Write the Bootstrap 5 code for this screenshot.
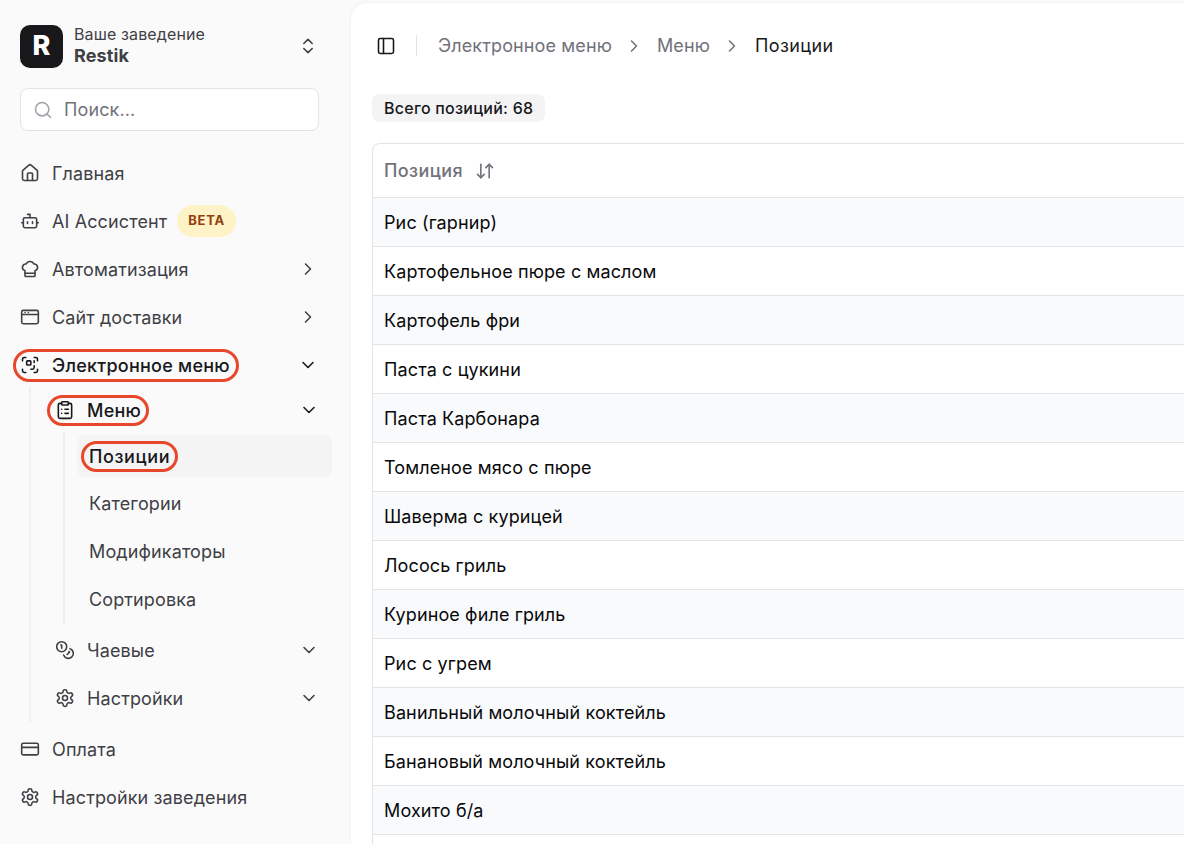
<!DOCTYPE html>
<html lang="ru">
<head>
  <meta charset="UTF-8" />
  <meta name="viewport" content="width=device-width, initial-scale=1.0" />
  <title>Позиции - Restik</title>
  <link href="https://cdn.jsdelivr.net/npm/bootstrap@5.3.3/dist/css/bootstrap.min.css" rel="stylesheet" />
  <style>
    html, body {
      height: 100%;
      overflow: hidden;
    }
    body {
      background: #fafafa;
      font-family: Inter, "Noto Sans", sans-serif;
      color: #3f3f46;
      font-size: 18px;
      letter-spacing: .12px;
    }
    svg.ico {
      width: 20px;
      height: 20px;
      flex: none;
      fill: none;
      stroke: currentColor;
      stroke-width: 1.9;
      stroke-linecap: round;
      stroke-linejoin: round;
    }
    .side-panel {
      width: 351px;
      flex: none;
      padding: 24px 18px 0 20px;
    }
    .logo-box {
      width: 43px;
      height: 43px;
      border-radius: 10px;
      background: #18181b;
      color: #fff;
      font-weight: 800;
      font-size: 27px;
      flex: none;
      margin-right: 11px;
    }
    .org-label {
      font-size: 16px;
      line-height: 20px;
      color: #3f3f46;
    }
    .org-name {
      font-size: 18px;
      line-height: 24px;
      font-weight: 700;
      color: #3f3f46;
    }
    .search-box {
      width: 299px;
      height: 43px;
      margin-top: 20px;
      margin-bottom: 18px;
      background: #fff;
      border: 1px solid #e4e4e7;
      border-radius: 8px;
      padding-left: 12px;
      color: #71717a;
      gap: 11px;
    }
    .nav-line {
      height: 48px;
      width: 299px;
      color: #3f3f46;
      gap: 12px;
      position: relative;
    }
    .nav-line .caret {
      margin-left: auto;
      margin-right: 1px;
    }
    .nav-line.on {
      color: #18181b;
    }
    .on-text {
      font-weight: 500;
      letter-spacing: .25px;
    }
    .beta-tag {
      background: #fef3c7;
      color: #92400e;
      font-size: 13px;
      font-weight: 700;
      letter-spacing: .7px;
      height: 32px;
      padding: 0 11px;
      border-radius: 16px;
      margin-left: -2px;
    }
    .sub-one {
      margin-left: 9px;
      border-left: 2px solid #f0f0f1;
      padding: 1px 0 0 24px;
      margin-top: -2px;
      margin-bottom: 3px;
      height: 335px;
    }
    .sub-line {
      height: 44px;
      width: 265px;
      gap: 12px;
      margin-bottom: 4px;
    }
    .sub-two {
      margin-left: 8px;
      border-left: 2px solid #f0f0f1;
      padding: 3px 0 4px 12px;
      margin-bottom: 4px;
      margin-top: -4px;
    }
    .leaf-line {
      height: 42px;
      width: 255px;
      margin-bottom: 6px;
      padding-left: 12px;
      border-radius: 8px;
      color: #3f3f46;
    }
    .leaf-line:last-child {
      margin-bottom: 0;
    }
    .leaf-line.on {
      background: #f4f4f5;
      color: #18181b;
      margin-bottom: 5px;
    }
    .leaf-line.on .on-text {
      letter-spacing: .6px;
    }
    .mark-ring {
      position: absolute;
      border: 3px solid #e8472b;
      border-radius: 999px;
      pointer-events: none;
    }
    .main-panel {
      margin-top: 3px;
      background: #fff;
      border-top-left-radius: 16px;
      box-shadow: 0 0 3px rgba(0, 0, 0, .08);
      padding-left: 21px;
      min-width: 0;
    }
    .crumb-bar {
      height: 85px;
      padding-left: 4px;
      color: #71717a;
    }
    .crumb-sep {
      width: 1px;
      height: 21px;
      background: #e4e4e7;
      margin: 0 21px 0 20px;
    }
    .crumb-arrow {
      width: 14px;
      height: 14px;
      margin: 0 13px 0 12px;
      color: #71717a;
    }
    .crumb-now {
      color: #18181b;
      letter-spacing: .4px;
    }
    .count-pill {
      display: inline-block;
      background: #f4f4f5;
      color: #18181b;
      font-size: 16px;
      font-weight: 500;
      letter-spacing: .25px;
      line-height: 28px;
      padding: 0 12px;
      border-radius: 8px;
      margin-top: 6px;
      margin-bottom: 21px;
      vertical-align: top;
    }
    .pos-table {
      border: 1px solid #e4e4e7;
      border-right: 0;
      border-top-left-radius: 8px;
      width: 900px;
    }
    .pos-head {
      height: 53px;
      padding-left: 11px;
      color: #71717a;
      font-weight: 500;
      letter-spacing: .4px;
      gap: 12px;
    }
    .pos-row {
      height: 49px;
      border-top: 1px solid #e4e4e7;
      padding-left: 11px;
      color: #09090b;
    }
    .pos-row:nth-child(even) {
      background: #f9fafb;
    }
  </style>
</head>
<body>
  <div class="d-flex h-100">
    <!-- Sidebar -->
    <div class="side-panel position-relative">
      <div class="d-flex align-items-center" style="width:299px">
        <div class="logo-box d-flex align-items-center justify-content-center">R</div>
        <div>
          <div class="org-label">Ваше заведение</div>
          <div class="org-name">Restik</div>
        </div>
        <svg class="ico ms-auto" viewBox="0 0 24 24" style="margin-right:1px"><path d="m7 15 5 5 5-5"/><path d="m7 9 5-5 5 5"/></svg>
      </div>

      <div class="search-box d-flex align-items-center">
        <svg class="ico" viewBox="0 0 24 24" style="color:#a1a1aa"><circle cx="11" cy="11" r="8"/><path d="m21 21-4.3-4.3"/></svg>
        <span>Поиск...</span>
      </div>

      <div class="nav-line d-flex align-items-center">
        <svg class="ico" viewBox="0 0 24 24"><path d="M15 21v-8a1 1 0 0 0-1-1h-4a1 1 0 0 0-1 1v8"/><path d="M3 10a2 2 0 0 1 .7-1.5l7-6a2 2 0 0 1 2.6 0l7 6A2 2 0 0 1 21 10v9a2 2 0 0 1-2 2H5a2 2 0 0 1-2-2z"/></svg>
        <span>Главная</span>
      </div>
      <div class="nav-line d-flex align-items-center">
        <svg class="ico" viewBox="0 0 24 24"><path d="M12 8V4H9"/><rect x="4" y="8" width="16" height="12" rx="2"/><path d="M2 14h2"/><path d="M20 14h2"/><path d="M15 13v2"/><path d="M9 13v2"/></svg>
        <span>AI Ассистент</span>
        <span class="beta-tag d-flex align-items-center">BETA</span>
      </div>
      <div class="nav-line d-flex align-items-center">
        <svg class="ico" viewBox="0 0 24 24"><path d="M17 21a1 1 0 0 0 1-1v-5.35c0-.46.31-.85.75-1.03a4 4 0 0 0-2.13-7.6 5 5 0 0 0-9.24 0 4 4 0 0 0-2.13 7.6c.44.18.75.57.75 1.03V20a1 1 0 0 0 1 1z"/><path d="M6 17h12"/></svg>
        <span>Автоматизация</span>
        <svg class="ico caret" viewBox="0 0 24 24"><path d="m9 18 6-6-6-6"/></svg>
      </div>
      <div class="nav-line d-flex align-items-center">
        <svg class="ico" viewBox="0 0 24 24"><rect x="2" y="4" width="20" height="16" rx="2"/><path d="M2 9h20"/><path d="M6 6.5h.01"/><path d="M10 6.5h.01"/></svg>
        <span>Сайт доставки</span>
        <svg class="ico caret" viewBox="0 0 24 24"><path d="m9 18 6-6-6-6"/></svg>
      </div>
      <div class="nav-line on d-flex align-items-center">
        <svg class="ico" viewBox="0 0 24 24"><path d="M3 7V5a2 2 0 0 1 2-2h2"/><path d="M17 3h2a2 2 0 0 1 2 2v2"/><path d="M21 17v2a2 2 0 0 1-2 2h-2"/><path d="M7 21H5a2 2 0 0 1-2-2v-2"/><rect x="8" y="7" width="5" height="5" rx="1"/><path d="M17 13v2a2 2 0 0 1-2 2h-2"/><path d="M17 7v2"/></svg>
        <span class="on-text">Электронное меню</span>
        <svg class="ico caret" viewBox="0 0 24 24"><path d="m6 9 6 6 6-6"/></svg>
        <span class="mark-ring" style="left:-7px;top:8px;width:226px;height:33px"></span>
      </div>

      <div class="sub-one">
        <div class="sub-line on nav-line d-flex align-items-center">
          <svg class="ico" viewBox="0 0 24 24"><rect x="8" y="2" width="8" height="4" rx="1"/><path d="M16 4h2a2 2 0 0 1 2 2v14a2 2 0 0 1-2 2H6a2 2 0 0 1-2-2V6a2 2 0 0 1 2-2h2"/><path d="M12 11h4"/><path d="M12 16h4"/><path d="M8 11h.01"/><path d="M8 16h.01"/></svg>
          <span class="on-text">Меню</span>
          <svg class="ico caret" viewBox="0 0 24 24"><path d="m6 9 6 6 6-6"/></svg>
          <span class="mark-ring" style="left:-8px;top:7px;width:102px;height:31px"></span>
        </div>
        <div class="sub-two">
          <div class="leaf-line on d-flex align-items-center position-relative">
            <span class="on-text">Позиции</span>
            <span class="mark-ring" style="left:4px;top:6px;width:97px;height:31px"></span>
          </div>
          <div class="leaf-line d-flex align-items-center">Категории</div>
          <div class="leaf-line d-flex align-items-center">Модификаторы</div>
          <div class="leaf-line d-flex align-items-center">Сортировка</div>
        </div>
        <div class="sub-line nav-line d-flex align-items-center">
          <svg class="ico" viewBox="0 0 24 24"><circle cx="8" cy="8" r="6"/><path d="M18.09 10.37A6 6 0 1 1 10.34 18"/><path d="M7 6h1v4"/><path d="m16.71 13.88.7.71-2.82 2.82"/></svg>
          <span>Чаевые</span>
          <svg class="ico caret" viewBox="0 0 24 24"><path d="m6 9 6 6 6-6"/></svg>
        </div>
        <div class="sub-line nav-line d-flex align-items-center">
          <svg class="ico" viewBox="0 0 24 24"><path d="M12.22 2h-.44a2 2 0 0 0-2 2v.18a2 2 0 0 1-1 1.73l-.43.25a2 2 0 0 1-2 0l-.15-.08a2 2 0 0 0-2.73.73l-.22.38a2 2 0 0 0 .73 2.73l.15.1a2 2 0 0 1 1 1.72v.51a2 2 0 0 1-1 1.74l-.15.09a2 2 0 0 0-.73 2.73l.22.38a2 2 0 0 0 2.73.73l.15-.08a2 2 0 0 1 2 0l.43.25a2 2 0 0 1 1 1.73V20a2 2 0 0 0 2 2h.44a2 2 0 0 0 2-2v-.18a2 2 0 0 1 1-1.73l.43-.25a2 2 0 0 1 2 0l.15.08a2 2 0 0 0 2.73-.73l.22-.39a2 2 0 0 0-.73-2.73l-.15-.08a2 2 0 0 1-1-1.74v-.5a2 2 0 0 1 1-1.74l.15-.09a2 2 0 0 0 .73-2.73l-.22-.38a2 2 0 0 0-2.73-.73l-.15.08a2 2 0 0 1-2 0l-.43-.25a2 2 0 0 1-1-1.73V4a2 2 0 0 0-2-2z"/><circle cx="12" cy="12" r="3"/></svg>
          <span>Настройки</span>
          <svg class="ico caret" viewBox="0 0 24 24"><path d="m6 9 6 6 6-6"/></svg>
        </div>
      </div>

      <div class="nav-line d-flex align-items-center">
        <svg class="ico" viewBox="0 0 24 24"><rect x="2" y="5" width="20" height="14" rx="2"/><path d="M2 10h20"/></svg>
        <span>Оплата</span>
      </div>
      <div class="nav-line d-flex align-items-center">
        <svg class="ico" viewBox="0 0 24 24"><path d="M12.22 2h-.44a2 2 0 0 0-2 2v.18a2 2 0 0 1-1 1.73l-.43.25a2 2 0 0 1-2 0l-.15-.08a2 2 0 0 0-2.73.73l-.22.38a2 2 0 0 0 .73 2.73l.15.1a2 2 0 0 1 1 1.72v.51a2 2 0 0 1-1 1.74l-.15.09a2 2 0 0 0-.73 2.73l.22.38a2 2 0 0 0 2.73.73l.15-.08a2 2 0 0 1 2 0l.43.25a2 2 0 0 1 1 1.73V20a2 2 0 0 0 2 2h.44a2 2 0 0 0 2-2v-.18a2 2 0 0 1 1-1.73l.43-.25a2 2 0 0 1 2 0l.15.08a2 2 0 0 0 2.73-.73l.22-.39a2 2 0 0 0-.73-2.73l-.15-.08a2 2 0 0 1-1-1.74v-.5a2 2 0 0 1 1-1.74l.15-.09a2 2 0 0 0 .73-2.73l-.22-.38a2 2 0 0 0-2.73-.73l-.15.08a2 2 0 0 1-2 0l-.43-.25a2 2 0 0 1-1-1.73V4a2 2 0 0 0-2-2z"/><circle cx="12" cy="12" r="3"/></svg>
        <span>Настройки заведения</span>
      </div>
    </div>

    <!-- Main -->
    <div class="main-panel flex-grow-1 overflow-hidden">
      <div class="crumb-bar d-flex align-items-center">
        <svg class="ico" viewBox="0 0 24 24" style="color:#18181b"><rect x="3" y="3" width="18" height="18" rx="2"/><path d="M9 3v18"/></svg>
        <span class="crumb-sep"></span>
        <span>Электронное меню</span>
        <svg class="ico crumb-arrow" viewBox="0 0 24 24"><path d="m9 18 6-6-6-6"/></svg>
        <span>Меню</span>
        <svg class="ico crumb-arrow" viewBox="0 0 24 24"><path d="m9 18 6-6-6-6"/></svg>
        <span class="crumb-now">Позиции</span>
      </div>

      <span class="count-pill">Всего позиций: 68</span>

      <div class="pos-table">
        <div class="pos-head d-flex align-items-center">
          <span>Позиция</span>
          <svg class="ico" viewBox="0 0 24 24"><path d="m3 16 4 4 4-4"/><path d="M7 20V4"/><path d="m21 8-4-4-4 4"/><path d="M17 4v16"/></svg>
        </div>
        <div class="pos-row d-flex align-items-center">Рис (гарнир)</div>
        <div class="pos-row d-flex align-items-center">Картофельное пюре с маслом</div>
        <div class="pos-row d-flex align-items-center">Картофель фри</div>
        <div class="pos-row d-flex align-items-center">Паста с цукини</div>
        <div class="pos-row d-flex align-items-center">Паста Карбонара</div>
        <div class="pos-row d-flex align-items-center">Томленое мясо с пюре</div>
        <div class="pos-row d-flex align-items-center">Шаверма с курицей</div>
        <div class="pos-row d-flex align-items-center">Лосось гриль</div>
        <div class="pos-row d-flex align-items-center">Куриное филе гриль</div>
        <div class="pos-row d-flex align-items-center">Рис с угрем</div>
        <div class="pos-row d-flex align-items-center">Ванильный молочный коктейль</div>
        <div class="pos-row d-flex align-items-center">Банановый молочный коктейль</div>
        <div class="pos-row d-flex align-items-center">Мохито б/а</div>
        <div class="pos-row d-flex align-items-center"></div>
      </div>
    </div>
  </div>
  <script src="https://cdn.jsdelivr.net/npm/bootstrap@5.3.3/dist/js/bootstrap.bundle.min.js"></script>
</body>
</html>
